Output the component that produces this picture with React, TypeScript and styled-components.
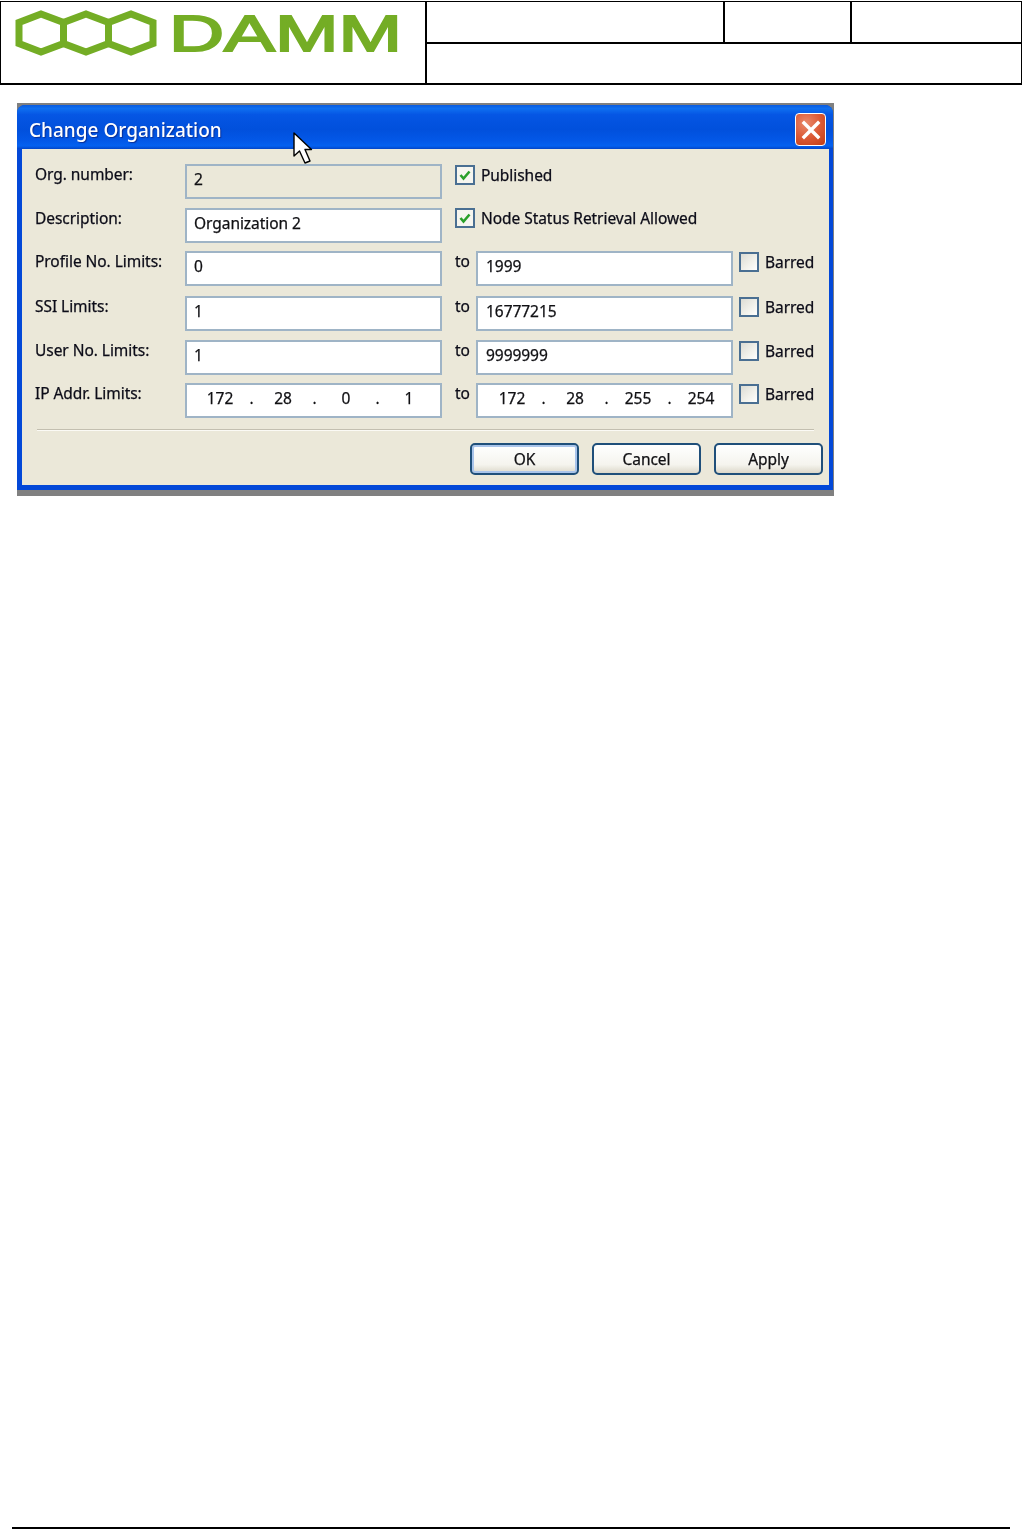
import React from "react";
import styled, { createGlobalStyle } from "styled-components";

const GlobalStyle = createGlobalStyle`
  html, body {
    margin: 0;
    padding: 0;
    background: #fff;
    overflow: hidden;
  }
`;

const Page = styled.div`
  width: 1022px;
  height: 1530px;
  display: flex;
  flex-direction: column;
  font-family: "Noto Sans", "DejaVu Sans", sans-serif;
`;

const Header = styled.div`
  display: flex;
  height: 81px;
  margin-top: 1px;
  border: 1px solid #000;
  border-bottom-width: 2px;
`;

const LogoCell = styled.div`
  width: 424px;
  border-right: 2px solid #000;
`;

const InfoCell = styled.div`
  flex: 1;
  display: flex;
  flex-direction: column;
`;

const InfoTop = styled.div`
  display: flex;
  height: 40px;
  border-bottom: 2px solid #000;
`;

const InfoBox = styled.div<{ $w?: number }>`
  width: ${({ $w }) => ($w ? `${$w}px` : "auto")};
  flex: ${({ $w }) => ($w ? "none" : "1")};
  border-right: ${({ $w }) => ($w ? "2px solid #000" : "none")};
`;

const Shadow = styled.div`
  width: 817px;
  height: 393px;
  margin: 18px 0 0 17px;
  padding-top: 2px;
  box-sizing: border-box;
  background: #808080;
`;

const Win = styled.div`
  position: relative;
  width: 816px;
  height: 385px;
  display: flex;
  flex-direction: column;
  border-radius: 8px 8px 0 0;
  background: #0348d8;
  filter: blur(0.4px);
`;

const TitleBar = styled.div`
  height: 44px;
  flex: none;
  display: flex;
  align-items: center;
  justify-content: space-between;
  padding: 0 7px 0 12px;
  border-radius: 8px 8px 0 0;
  background: linear-gradient(
    180deg,
    #0a5be0 0%,
    #0f6ff0 8%,
    #0556e4 22%,
    #0150dc 55%,
    #0358e8 82%,
    #0461f0 93%,
    #0245c8 100%
  );
`;

const Title = styled.div`
  color: #fff;
  font-size: 19px;
  font-weight: 500;
  margin-top: 5px;
  text-shadow: 1px 1px 1px #0a2f96;
`;

const CloseButton = styled.div`
  width: 31px;
  height: 33px;
  box-sizing: border-box;
  margin-top: 5px;
  border: 1px solid #fff;
  border-radius: 4px;
  background: radial-gradient(circle at 35% 30%, #e98a6c 0%, #dc5a36 50%, #c13c14 100%);
  display: flex;
  align-items: center;
  justify-content: center;
`;

const Client = styled.div`
  width: 807px;
  height: 336px;
  margin-left: 5px;
  padding-top: 15px;
  box-sizing: border-box;
  background: #ebe8d9;
  color: #0c0c18;
  font-size: 15.5px;
  letter-spacing: -0.05px;
  -webkit-text-stroke: 0.25px #0c0c18;
`;

const Row = styled.div<{ $h: number }>`
  display: flex;
  height: ${({ $h }) => $h}px;
  padding-left: 13px;
`;

const Label = styled.div`
  width: 150px;
  flex: none;
  line-height: 20px;
`;

const Field = styled.div<{ $disabled?: boolean; $w?: number; $pad?: number }>`
  width: ${({ $w }) => $w ?? 257}px;
  height: 34.5px;
  flex: none;
  box-sizing: border-box;
  display: flex;
  align-items: center;
  padding: 0 0 4px ${({ $pad }) => $pad ?? 7}px;
  border: 2px solid #9fb4c6;
  background: ${({ $disabled }) => ($disabled ? "#ebe8d9" : "#fff")};
  color: #111;
  white-space: nowrap;
`;

const Octet = styled.span`
  width: 36px;
  text-align: center;
`;

const Dot = styled.span`
  width: 27px;
  text-align: center;
`;

const ToLabel = styled.div`
  width: 21px;
  margin-left: 13px;
  flex: none;
  line-height: 20px;
`;

const CheckWrap = styled.div<{ $ml: number; $top: number }>`
  display: flex;
  flex: none;
  margin-left: ${({ $ml }) => $ml}px;
  margin-top: ${({ $top }) => $top}px;
  line-height: 20px;
  white-space: nowrap;
`;

const Box = styled.div<{ $checked?: boolean }>`
  width: 20px;
  height: 20px;
  margin-right: 6px;
  box-sizing: border-box;
  border: 2px solid #4a6f92;
  background: ${({ $checked }) =>
    $checked ? "#f6f5ef" : "linear-gradient(135deg, #dcdcd4 0%, #f2f2ec 60%, #fff 100%)"};
  display: flex;
  align-items: center;
  justify-content: center;
`;

const Separator = styled.div`
  margin: 12px 15px 12px;
  height: 1px;
  background: #c3bfb0;
  border-bottom: 1px solid #fbfaf5;
`;

const ButtonBar = styled.div`
  display: flex;
  justify-content: flex-end;
  gap: 13px;
  padding-right: 6px;
`;

const Button = styled.div<{ $default?: boolean }>`
  width: 109px;
  height: 32px;
  box-sizing: border-box;
  display: flex;
  align-items: center;
  justify-content: center;
  border: 2px solid #1f4f7a;
  border-radius: 5px;
  color: #111;
  background: linear-gradient(180deg, #fff 0%, #f5f4ee 70%, #dcd8ca 100%);
  box-shadow: ${({ $default }) => ($default ? "inset 0 0 0 2px #a9c4ea" : "none")};
`;

const Cursor = styled.svg`
  position: absolute;
  left: 276px;
  top: 27px;
`;

const FooterLine = styled.div`
  margin: auto 12px 1px;
  height: 2px;
  background: #000;
`;

const Logo = () => (
  <svg width="424" height="60" viewBox="0 0 424 60" style={{ display: "block" }}>
    <g fill="none" stroke="#74ad25" strokeWidth="7" strokeLinejoin="miter">
      <polygon points="40,12 62.5,20.5 62.5,41.5 40,50 18,41.5 18,20.5" />
      <polygon points="85,12 107.5,20.5 107.5,41.5 85,50 62.5,41.5 62.5,20.5" />
      <polygon points="130,12 152,20.5 152,41.5 130,50 107.5,41.5 107.5,20.5" />
    </g>
    <text
      x="168"
      y="49"
      fontFamily="'Liberation Sans', sans-serif"
      fontWeight="400"
      fontSize="50"
      fill="#74ad25"
      stroke="#74ad25"
      strokeWidth="1.8"
      textLength="233"
      lengthAdjust="spacingAndGlyphs"
    >
      DAMM
    </text>
  </svg>
);

const Check = () => (
  <svg width="14" height="14" viewBox="0 0 14 14">
    <path d="M2.5 7 L5.5 10.5 L11.5 3.5" fill="none" stroke="#2aa02a" strokeWidth="2.6" />
  </svg>
);

const CloseX = () => (
  <svg width="20" height="20" viewBox="0 0 20 20">
    <path d="M3 3 L17 17 M17 3 L3 17" stroke="#fff" strokeWidth="3.4" strokeLinecap="square" />
  </svg>
);

const CheckItem = ({ text, checked, ml, top }: { text: string; checked?: boolean; ml: number; top: number }) => (
  <CheckWrap $ml={ml} $top={top}>
    <Box $checked={checked}>{checked && <Check />}</Box>
    {text}
  </CheckWrap>
);

const IpField = ({ octets, w }: { octets: string[]; w?: number }) => (
  <Field $w={w} $pad={w ? 16 : 15}>
    {octets.map((o, i) => (
      <React.Fragment key={i}>
        {i > 0 && <Dot>.</Dot>}
        <Octet>{o}</Octet>
      </React.Fragment>
    ))}
  </Field>
);

const limits = [
  { label: "Profile No. Limits:", from: "0", to: "1999", h: 45 },
  { label: "SSI Limits:", from: "1", to: "16777215", h: 44 },
  { label: "User No. Limits:", from: "1", to: "9999999", h: 43 },
];

export default function App() {
  return (
    <Page>
      <GlobalStyle />
      <Header>
        <LogoCell>
          <Logo />
        </LogoCell>
        <InfoCell>
          <InfoTop>
            <InfoBox $w={296} />
            <InfoBox $w={125} />
            <InfoBox />
          </InfoTop>
        </InfoCell>
      </Header>

      <Shadow>
        <Win>
          <TitleBar>
            <Title>Change Organization</Title>
            <CloseButton>
              <CloseX />
            </CloseButton>
          </TitleBar>
          <Client>
            <Row $h={44}>
              <Label>Org. number:</Label>
              <Field $disabled>2</Field>
              <CheckItem text="Published" checked ml={13} top={1} />
            </Row>
            <Row $h={43}>
              <Label>Description:</Label>
              <Field>Organization 2</Field>
              <CheckItem text="Node Status Retrieval Allowed" checked ml={13} top={0} />
            </Row>
            {limits.map((l) => (
              <Row $h={l.h} key={l.label}>
                <Label>{l.label}</Label>
                <Field>{l.from}</Field>
                <ToLabel>to</ToLabel>
                <Field $w={257} $pad={8}>
                  {l.to}
                </Field>
                <CheckItem text="Barred" ml={6} top={1} />
              </Row>
            ))}
            <Row $h={34}>
              <Label>IP Addr. Limits:</Label>
              <IpField octets={["172", "28", "0", "1"]} />
              <ToLabel>to</ToLabel>
              <IpField octets={["172", "28", "255", "254"]} w={257} />
              <CheckItem text="Barred" ml={6} top={1} />
            </Row>
            <Separator />
            <ButtonBar>
              <Button $default>OK</Button>
              <Button>Cancel</Button>
              <Button>Apply</Button>
            </ButtonBar>
          </Client>
          <Cursor width="22" height="34" viewBox="0 0 22 34">
            <path
              d="M1 1 L1 24 L6.5 19 L12 31 L17 29 L12 17.5 L18.5 17.5 Z"
              fill="#fff"
              stroke="#000"
              strokeWidth="1.4"
              strokeLinejoin="round"
            />
          </Cursor>
        </Win>
      </Shadow>

      <FooterLine />
    </Page>
  );
}
